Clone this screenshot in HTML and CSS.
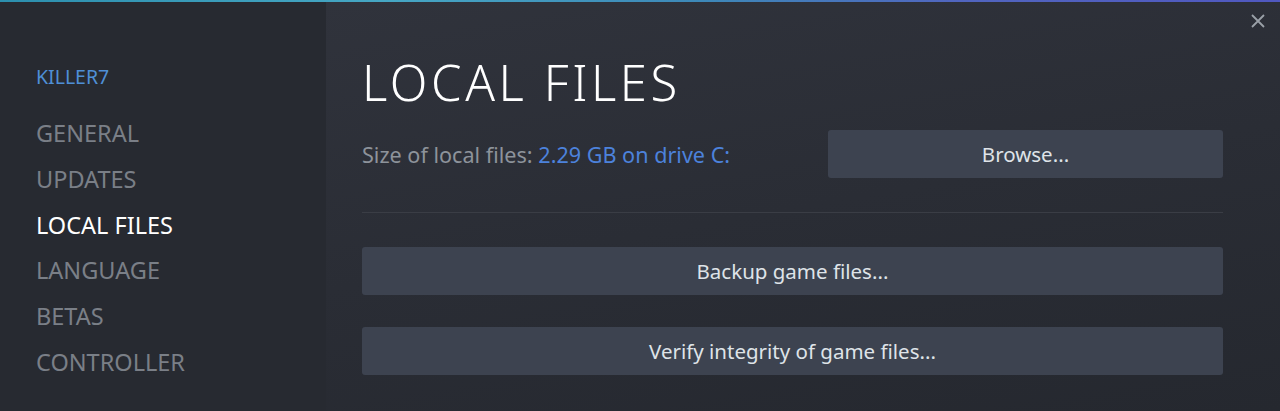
FILE: index.html
```html
<!DOCTYPE html>
<html>
<head>
<meta charset="utf-8">
<link rel="stylesheet" href="styles.css">
</head>
<body>
<div class="topline"></div>
<div class="window">
  <nav class="sidebar">
    <div class="game">KILLER7</div>
    <div class="nav-item">GENERAL</div>
    <div class="nav-item">UPDATES</div>
    <div class="nav-item active">LOCAL FILES</div>
    <div class="nav-item">LANGUAGE</div>
    <div class="nav-item">BETAS</div>
    <div class="nav-item">CONTROLLER</div>
  </nav>
  <main class="content">
    <h1 class="title">LOCAL FILES</h1>
    <div class="size-row">
      <div class="size-label">Size of local files: <span class="size-value">2.29 GB on drive C:</span></div>
      <button class="btn browse">Browse...</button>
    </div>
    <div class="separator"></div>
    <button class="btn wide">Backup game files...</button>
    <button class="btn wide">Verify integrity of game files...</button>
  </main>
  <button class="close" aria-label="Close">
    <svg width="16" height="16" viewBox="0 0 16 16"><path d="M2 2 L14 14 M14 2 L2 14" stroke="#9aa0a8" stroke-width="1.8" fill="none"/></svg>
  </button>
</div>
</body>
</html>
```

FILE: styles.css
```css
* { box-sizing: border-box; }
html, body { margin: 0; padding: 0; }
body {
  width: 1280px;
  height: 411px;
  overflow: hidden;
  background: #262930;
  font-family: "Noto Sans", "Open Sans", sans-serif;
}
.topline {
  height: 2px;
  background: linear-gradient(90deg, #2c8fae 0%, #46a7c4 30%, #3d88b8 55%, #5165bf 75%, #5058c0 100%);
}
.window {
  position: relative;
  display: flex;
  height: 409px;
}
.sidebar {
  width: 326px;
  flex: none;
  background: #272a31;
  padding: 61px 0 0 36px;
}
.game {
  color: #4f8fd6;
  font-size: 19.5px;
  line-height: 28px;
  margin-bottom: 26px;
}
.nav-item {
  color: #7a7f87;
  font-size: 23.5px;
  line-height: 32px;
  margin-bottom: 13.8px;
}
.nav-item.active { color: #ffffff; }
.content {
  flex: 1;
  background: linear-gradient(170deg, #30333c 0%, #2a2d35 50%, #25282f 100%);
  padding: 48px 57px 0 36px;
}
.title {
  margin: 0;
  color: #ffffff;
  font-weight: 300;
  font-size: 49px;
  line-height: 64px;
  letter-spacing: 3.6px;
}
.size-row {
  display: flex;
  align-items: center;
  justify-content: space-between;
  margin-top: 16px;
}
.size-label {
  color: #8d939b;
  font-size: 21.6px;
}
.size-value { color: #4c82dc; }
.btn {
  display: block;
  border: 0;
  border-radius: 3px;
  background: #3d4350;
  color: #dfe3e8;
  font-family: inherit;
  font-size: 20.5px;
  height: 48px;
  padding: 0;
}
.browse { width: 395px; }
.separator {
  height: 1px;
  background: #3a3d45;
  margin: 34px 0 34px;
}
.wide {
  width: 100%;
  margin-bottom: 32px;
}
.close {
  position: absolute;
  top: 11px;
  right: 14px;
  background: none;
  border: 0;
  padding: 0;
  width: 16px;
  height: 16px;
}
.close svg { display: block; }
```
